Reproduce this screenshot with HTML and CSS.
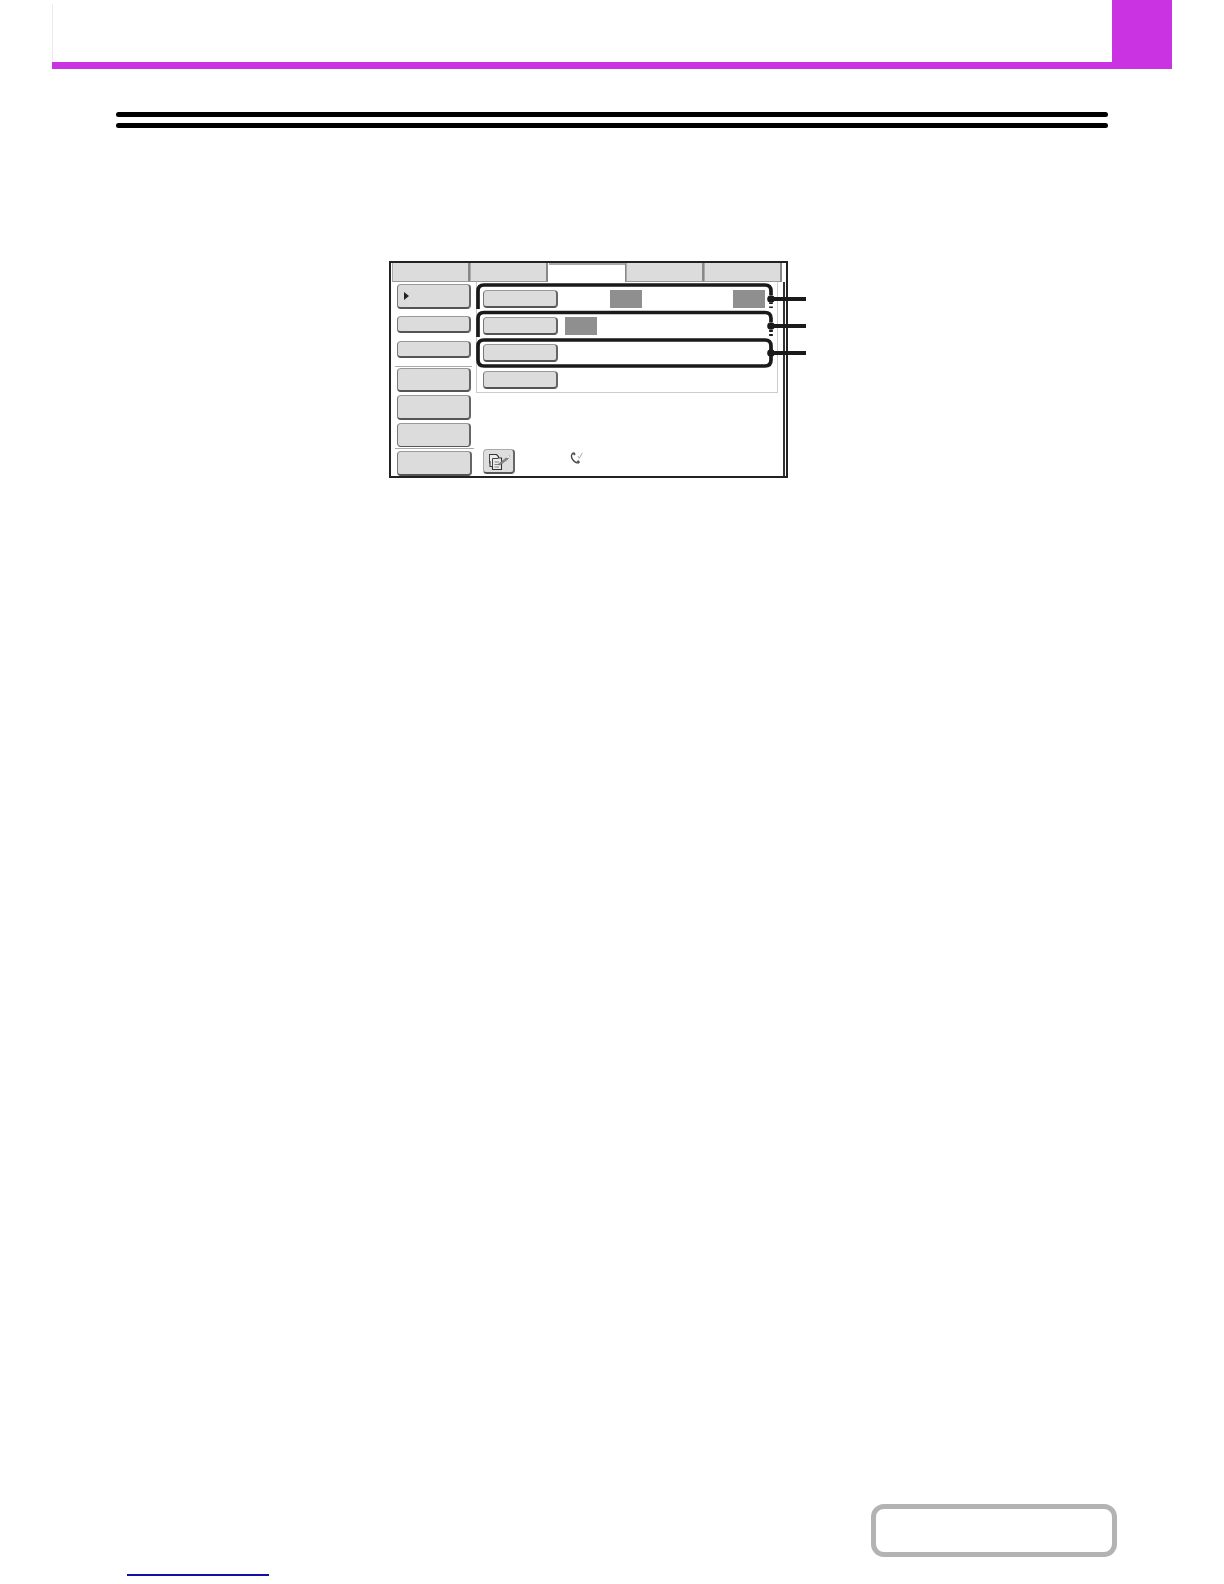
FILE: index.html
```html
<!DOCTYPE html>
<html lang="en">
<head>
<meta charset="utf-8">
<title>Screen</title>
<link rel="stylesheet" href="styles.css">
</head>
<body>
<header class="top"><div class="top-fill"></div><div class="top-tab"></div></header>
<div class="rules"><div class="rule"></div><div class="rule"></div></div>

<figure class="figure">
  <div class="panel">
    <div class="tabs">
      <div class="tab"></div>
      <div class="tab"></div>
      <div class="tab tab-active"></div>
      <div class="tab"></div>
      <div class="tab"></div>
    </div>
    <div class="panel-body">
      <div class="side">
        <div class="btn side-a"><span class="arrow"></span></div>
        <div class="btn side-b"></div>
        <div class="btn side-c"></div>
        <div class="sep"></div>
        <div class="btn side-d"></div>
        <div class="btn side-e"></div>
        <div class="btn side-f"></div>
        <div class="sep sep-wide"></div>
        <div class="btn side-g"></div>
      </div>
      <div class="main">
        <div class="list">
          <div class="row"><div class="btn row-btn"></div><div class="swatch swatch-a"></div><div class="swatch swatch-b"></div></div>
          <div class="row"><div class="btn row-btn"></div><div class="swatch swatch-c"></div></div>
          <div class="row"><div class="btn row-btn"></div></div>
          <div class="row"><div class="btn row-btn"></div></div>
        </div>
        <div class="foot">
          <div class="btn icon-btn">
            <svg class="doc-icon" width="25" height="19" viewBox="0 0 25 19" aria-hidden="true">
              <path d="M3 2.5H10.5L12.5 4.5V6H15.5V17.5H6.5V14.5H4V9" fill="#ececec" stroke="#333" stroke-width="1.1"/>
              <path d="M3.5 2.5V11.5M6.5 6.5V14.5" fill="none" stroke="#444" stroke-width="1"/>
              <path d="M6.5 6.5H12" fill="none" stroke="#444" stroke-width="1"/>
              <path d="M8.5 10H13M8.5 12.5H13M8.5 15H13" stroke="#777" stroke-width="0.9"/>
              <path d="M12 12.5L20 6L23.5 3.5L22 7L14 13Z" fill="#8a8a8a" stroke="#666" stroke-width="0.6"/>
              <path d="M20 5.5L23.5 3L22.5 6Z" fill="#fff"/>
            </svg>
          </div>
          <svg class="phone-icon" width="16" height="15" viewBox="0 0 16 15" aria-hidden="true">
            <path d="M4.5 2.2C2 3 1.8 5.6 3.6 8.4C5.2 10.8 7.4 12.6 9.8 11.6" fill="none" stroke="#444" stroke-width="1.3"/>
            <path d="M3.2 1.8L5.6 1.2L6.6 3.4L5 4.4ZM7.6 10L9.6 9.2L11.2 11.2L9.4 12.6Z" fill="#555"/>
            <path d="M9 5.2L10.2 7.4L13.4 1.8" fill="none" stroke="#aaa" stroke-width="1"/>
          </svg>
        </div>
      </div>
    </div>
  </div>
  <svg class="callouts" width="420" height="120" viewBox="0 0 420 120" aria-hidden="true">
    <g fill="none" stroke="#1a1a1a" stroke-width="3.7">
      <path d="M89 48V30Q89 24 95 24H376Q382 24 382 30V34"/>
      <path d="M382 41.5V43M382 45.5V47"/>
      <path d="M89 76V57.5Q89 51.5 95 51.5H376Q382 51.5 382 57.5V61"/>
      <path d="M382 69V71M382 73V75"/>
      <path d="M95 79H376Q382 79 382 85V99Q382 105 376 105H95Q89 105 89 99V85Q89 79 95 79Z"/>
    </g>
    <g fill="#1a1a1a">
      <circle cx="382" cy="38" r="3.8"/>
      <circle cx="382" cy="65" r="3.8"/>
      <circle cx="382" cy="92" r="3.8"/>
      <rect x="382" y="36" width="35" height="4"/>
      <rect x="382" y="63" width="35" height="4"/>
      <rect x="382" y="90" width="35" height="4"/>
    </g>
  </svg>
</figure>

<div class="contents-box"></div>
<div class="page-link"></div>
</body>
</html>
```
FILE: styles.css
```css
html, body {
  margin: 0;
  padding: 0;
  background: #fff;
  font-family: "Liberation Sans", sans-serif;
}

body {
  height: 1584px;
  overflow: hidden;
}

.top {
  display: flex;
  box-sizing: border-box;
  width: 1120px;
  height: 69px;
  margin-left: 52px;
  border-bottom: 7px solid #ca33e2;
}

.top-fill {
  flex: 1;
  border-left: 1px solid #f1e6f3;
  margin-top: 4px;
}

.top-tab {
  width: 60px;
  background: #ca33e2;
}

.rules {
  display: flex;
  flex-direction: column;
  gap: 6px;
  width: 992px;
  margin: 43px 0 0 116px;
}

.rule {
  height: 5px;
  border-radius: 3px;
  background: #000;
}

.figure {
  position: relative;
  width: 399px;
  margin: 133px 0 0 389px;
}

.panel {
  box-sizing: border-box;
  display: flex;
  flex-direction: column;
  width: 399px;
  height: 217px;
  border: 2px solid #222;
}

.tabs {
  display: flex;
  height: 19px;
  padding-left: 1px;
}

.tab {
  box-sizing: border-box;
  width: 78px;
  background: #dcdcdc;
  border-right: 2px solid #888;
  border-left: 1px solid #aaa;
  border-bottom: 1px solid #999;
}

.tab-active {
  background: #fff;
  border: 0;
  border-top: 2px solid #aaa;
  border-right: 1px solid #888;
  margin-left: 1px;
  width: 77px;
}

.panel-body {
  flex: 1;
  display: flex;
  margin-right: 1px;
  border-right: 2px solid #333;
  min-height: 0;
}

.side {
  display: flex;
  flex-direction: column;
  width: 81px;
  flex: none;
}

.btn {
  box-sizing: border-box;
  background: #dcdcdc;
  border: 1px solid #777;
  border-top-color: #999;
  border-bottom: 2px solid #555;
  border-right: 2px solid #666;
  border-radius: 4px;
}

.side .btn {
  width: 74px;
  margin-left: 6px;
}

.side-a {
  display: flex;
  align-items: center;
  height: 25px;
  margin-top: 2px;
  padding-left: 6px;
}

.side-b {
  height: 17px;
  margin-top: 7px;
}

.side-c {
  height: 17px;
  margin-top: 8px;
}

.sep {
  width: 77px;
  height: 1px;
  margin: 8px 0 1px 4px;
  background: #aaa;
}

.sep-wide {
  width: 79px;
  margin: 1px 0 2px 4px;
}

.side-d {
  height: 24px;
}

.side-e {
  height: 25px;
  margin-top: 3px;
}

.side-f {
  height: 24px;
  margin-top: 3px;
  border-bottom-width: 1px;
}

.side .side-g {
  width: 75px;
  height: 25px;
  margin-left: 6px;
}

.arrow {
  width: 0;
  height: 0;
  border-left: 5px solid #222;
  border-top: 4.5px solid transparent;
  border-bottom: 4.5px solid transparent;
}

.main {
  flex: 1;
  display: flex;
  flex-direction: column;
  min-width: 0;
}

.list {
  box-sizing: border-box;
  display: flex;
  flex-direction: column;
  gap: 9px;
  height: 111px;
  margin: 0 5px 0 4px;
  padding: 8px 0 0 6px;
  border: 1px solid #ccc;
  border-top: 0;
}

.row {
  display: flex;
  height: 18px;
}

.row-btn {
  width: 75px;
  height: 18px;
}

.swatch {
  width: 32px;
  height: 18px;
  background: #8f8f8f;
}

.swatch-a {
  margin-left: 52px;
}

.swatch-b {
  margin-left: 91px;
}

.swatch-c {
  margin-left: 7px;
}

.foot {
  display: flex;
  align-items: flex-start;
  margin-top: auto;
  padding: 0 0 2px 11px;
}

.icon-btn {
  display: flex;
  align-items: center;
  justify-content: center;
  width: 32px;
  height: 25px;
  background: #dedede;
  border-top-color: #aaa;
  border-left-color: #aaa;
}

.phone-icon {
  margin: 2px 0 0 54px;
}

.callouts {
  position: absolute;
  top: 0;
  left: 0;
}

.contents-box {
  box-sizing: border-box;
  width: 246px;
  height: 53px;
  margin: 1026px 0 0 871px;
  border: 5px solid #b3b3b3;
  border-radius: 13px;
}

.page-link {
  width: 142px;
  height: 1.5px;
  margin: 17px 0 0 127px;
  background: #1010a8;
}
```
